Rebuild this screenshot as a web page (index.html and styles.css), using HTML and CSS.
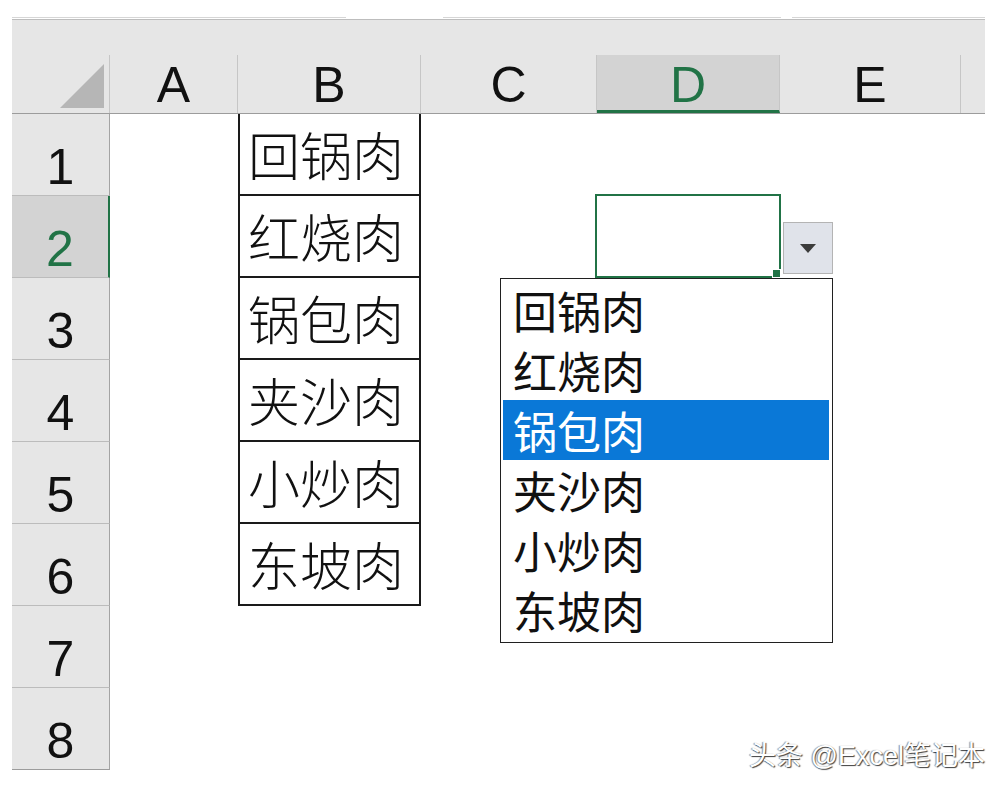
FILE: index.html
```html
<!DOCTYPE html>
<html lang="zh-CN">
<head>
    <meta charset="UTF-8">
    <meta name="viewport" content="width=device-width, initial-scale=1.0">
    <title>数据验证 下拉列表</title>
    <link rel="stylesheet" href="styles.css">
</head>
<body>
    <div class="top">
        <div class="box box1"></div>
        <div class="box box2"></div>
        <div class="box box3"></div>
    </div>

    <div class="sheet">
        <div class="colhead">
            <div class="corner">
                <svg width="44" height="44" viewBox="0 0 44 44"><polygon points="0,44 44,44 44,0" fill="#b6b6b6"/></svg>
            </div>
            <div class="ch w-a">A</div>
            <div class="ch w-b">B</div>
            <div class="ch w-c">C</div>
            <div class="ch w-d on">D</div>
            <div class="ch w-e">E</div>
            <div class="ch tail"></div>
        </div>

        <div class="row">
            <div class="rh">1</div>
            <div class="cell w-a"></div>
            <div class="cell w-b item">回锅肉</div>
            <div class="cell w-c"></div>
            <div class="cell w-d"></div>
            <div class="cell w-e"></div>
        </div>
        <div class="row">
            <div class="rh on">2</div>
            <div class="cell w-a"></div>
            <div class="cell w-b item">红烧肉</div>
            <div class="cell w-c"></div>
            <div class="cell w-d active">
                <div class="sel"><span class="handle"></span></div>
                <button class="dd-btn">
                    <svg width="16" height="9" viewBox="0 0 16 9"><polygon points="0,0 16,0 8,9" fill="#3c3c3c"/></svg>
                </button>
                <ul class="list">
                    <li class="opt">回锅肉</li>
                    <li class="opt">红烧肉</li>
                    <li class="opt hl">锅包肉</li>
                    <li class="opt">夹沙肉</li>
                    <li class="opt">小炒肉</li>
                    <li class="opt">东坡肉</li>
                </ul>
            </div>
            <div class="cell w-e"></div>
        </div>
        <div class="row">
            <div class="rh">3</div>
            <div class="cell w-a"></div>
            <div class="cell w-b item">锅包肉</div>
            <div class="cell w-c"></div>
            <div class="cell w-d"></div>
            <div class="cell w-e"></div>
        </div>
        <div class="row">
            <div class="rh">4</div>
            <div class="cell w-a"></div>
            <div class="cell w-b item">夹沙肉</div>
            <div class="cell w-c"></div>
            <div class="cell w-d"></div>
            <div class="cell w-e"></div>
        </div>
        <div class="row">
            <div class="rh">5</div>
            <div class="cell w-a"></div>
            <div class="cell w-b item">小炒肉</div>
            <div class="cell w-c"></div>
            <div class="cell w-d"></div>
            <div class="cell w-e"></div>
        </div>
        <div class="row">
            <div class="rh">6</div>
            <div class="cell w-a"></div>
            <div class="cell w-b item">东坡肉</div>
            <div class="cell w-c"></div>
            <div class="cell w-d"></div>
            <div class="cell w-e"></div>
        </div>
        <div class="row">
            <div class="rh">7</div>
        </div>
        <div class="row">
            <div class="rh last">8</div>
        </div>
    </div>

    <div class="mark">头条 @Excel笔记本</div>
</body>
</html>
```

FILE: styles.css
```css
*{
    margin: 0px;
    padding: 0px;
    box-sizing: border-box;
}
body{
    position: relative;
    width: 1006px;
    height: 788px;
    overflow: hidden;
    background-color: #fff;
    font-family: "Liberation Sans", Arial, sans-serif;
    color: #1e1e1e;
}

/* faixa de cima (barra de formulas cortada) */
.top{
    display: flex;
    height: 19px;
    padding-left: 12px;
}
.box{
    height: 18px;
    border-bottom: 1px solid #d6d6d6;
}
.box1{
    width: 334px;
    margin-right: 97px;
}
.box2{
    width: 338px;
    margin-right: 11px;
}
.box3{
    width: 193px;
}

/* planilha */
.sheet{
    margin-left: 12px;
    width: 973px;
}
.colhead{
    display: flex;
    align-items: flex-end;
    height: 95px;
    background-color: #e6e6e6;
    border-top: 1px solid #bdbdbd;
    border-bottom: 1px solid #9c9c9c;
}
.corner{
    display: flex;
    justify-content: flex-end;
    align-items: flex-end;
    width: 98px;
    height: 58px;
    padding: 0px 5px 5px 0px;
    border-right: 1px solid #c6c6c6;
}
.ch{
    height: 58px;
    padding-top: 2px;
    border-right: 1px solid #c6c6c6;
    text-align: center;
    font-size: 50px;
    line-height: 57px;
    color: #111;
}
.ch.on{
    background-color: #d3d3d3;
    color: #217346;
    border-bottom: 3px solid #217346;
}
.tail{
    border-right: none;
}
.w-a{ width: 128px; }
.w-b{ width: 183px; }
.w-c{ width: 176px; }
.w-d{ width: 183px; }
.w-e{ width: 181px; }
.tail{ width: 24px; }

.row{
    display: flex;
    height: 82px;
}
.rh{
    width: 98px;
    height: 82px;
    padding-top: 12px;
    background-color: #e6e6e6;
    border-right: 1px solid #a4a4a4;
    border-bottom: 1px solid #bcbcbc;
    text-align: center;
    font-size: 50px;
    line-height: 82px;
    color: #111;
}
.rh.on{
    background-color: #d3d3d3;
    color: #217346;
    border-right: 2px solid #217346;
}
.rh.last{
    border-bottom-color: #9c9c9c;
}
.cell{
    height: 82px;
}
.item{
    padding-left: 8px;
    border-left: 2px solid #1a1a1a;
    border-right: 2px solid #1a1a1a;
    border-bottom: 2px solid #1a1a1a;
    font-family: "Noto Sans CJK SC", sans-serif;
    font-size: 52px;
    font-weight: 300;
    line-height: 80px;
    color: #111;
}

/* celula D2 com validacao */
.active{
    position: relative;
}
.sel{
    position: absolute;
    left: -2px;
    top: -2px;
    right: -1px;
    bottom: 0px;
    border: 2px solid #217346;
}
.handle{
    position: absolute;
    right: -2px;
    bottom: -2px;
    width: 9px;
    height: 9px;
    background-color: #217346;
    border: 1px solid #fff;
}
.dd-btn{
    position: absolute;
    left: 186px;
    top: 26px;
    width: 50px;
    height: 52px;
    display: flex;
    align-items: center;
    justify-content: center;
    background-color: #e0e3ea;
    border: 1px solid #b4b4b4;
}
.list{
    position: absolute;
    left: -97px;
    top: 82px;
    width: 333px;
    height: 365px;
    padding: 1px 3px 2px 1px;
    list-style: none;
    background-color: #fff;
    border: 1px solid #202020;
    font-family: "Noto Sans CJK SC", sans-serif;
    font-size: 44px;
}
.opt{
    height: 60px;
    padding-left: 10px;
    margin-left: 1px;
    line-height: 60px;
    color: #111;
}
.opt.hl{
    background-color: #0a78d7;
    color: #fff;
}

/* marca d'agua */
.mark{
    position: absolute;
    right: 21px;
    bottom: 18px;
    font-family: "Liberation Sans", "Noto Sans CJK SC", sans-serif;
    font-size: 27px;
    line-height: 1;
    color: #fff;
    text-shadow: 1px 1px 1px rgba(0, 0, 0, 0.75), -1px 0px 1px rgba(0, 0, 0, 0.45);
}
```
